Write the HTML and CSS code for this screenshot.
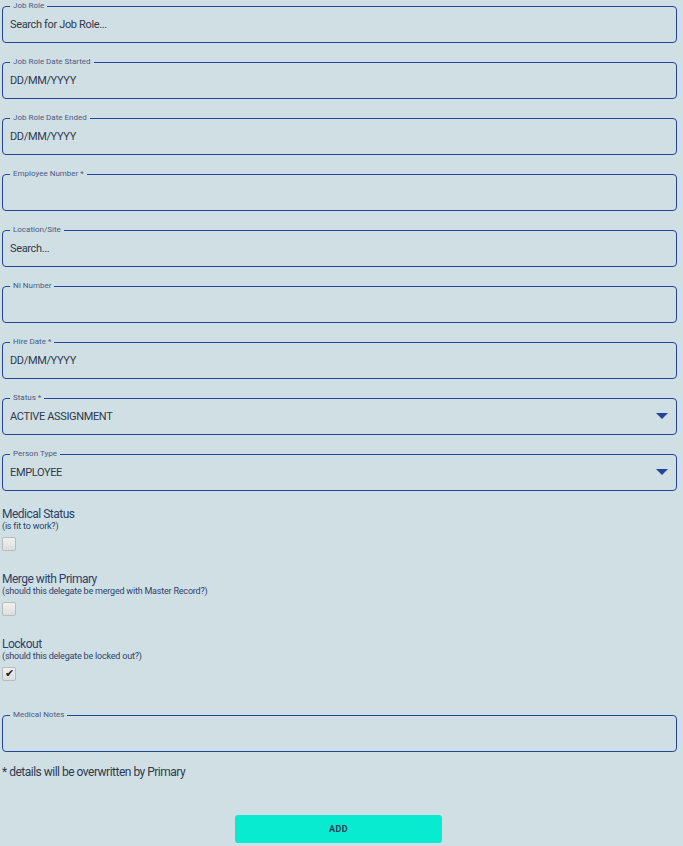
FILE: index.html
```html
<!DOCTYPE html>
<html>
<head>
	<title>Add Delegate</title>
	<link rel="stylesheet" href="styles.css">
</head>
<body>
<form class="delegate-form">
	<fieldset class="field">
		<legend>Job Role</legend>
		<div class="value placeholder">Search for Job Role...</div>
	</fieldset>
	<fieldset class="field">
		<legend>Job Role Date Started</legend>
		<div class="value placeholder">DD/MM/YYYY</div>
	</fieldset>
	<fieldset class="field">
		<legend>Job Role Date Ended</legend>
		<div class="value placeholder">DD/MM/YYYY</div>
	</fieldset>
	<fieldset class="field">
		<legend>Employee Number *</legend>
		<div class="value"></div>
	</fieldset>
	<fieldset class="field">
		<legend>Location/Site</legend>
		<div class="value placeholder">Search...</div>
	</fieldset>
	<fieldset class="field">
		<legend>NI Number</legend>
		<div class="value"></div>
	</fieldset>
	<fieldset class="field">
		<legend>Hire Date *</legend>
		<div class="value placeholder">DD/MM/YYYY</div>
	</fieldset>
	<fieldset class="field select">
		<legend>Status *</legend>
		<div class="value">ACTIVE ASSIGNMENT</div>
		<span class="caret"></span>
	</fieldset>
	<fieldset class="field select">
		<legend>Person Type</legend>
		<div class="value">EMPLOYEE</div>
		<span class="caret"></span>
	</fieldset>

	<div class="check">
		<div class="check-title">Medical Status</div>
		<div class="check-hint">(is fit to work?)</div>
		<span class="box"></span>
	</div>
	<div class="check">
		<div class="check-title">Merge with Primary</div>
		<div class="check-hint">(should this delegate be merged with Master Record?)</div>
		<span class="box"></span>
	</div>
	<div class="check">
		<div class="check-title">Lockout</div>
		<div class="check-hint">(should this delegate be locked out?)</div>
		<span class="box checked">&#10004;</span>
	</div>

	<fieldset class="field notes">
		<legend>Medical Notes</legend>
		<div class="value"></div>
	</fieldset>

	<p class="footnote">* details will be overwritten by Primary</p>

	<div class="actions">
		<button type="button" class="add-btn">ADD</button>
	</div>
</form>
</body>
</html>
```

FILE: styles.css
```css
body {
	margin: 0;
	background-color: #d0dfe3;
	font-family: Roboto, "Liberation Sans", sans-serif;
	color: #2f3a4f;
}

.delegate-form {
	padding: 1px 6px 0 2px;
}

.field {
	position: relative;
	margin: 0 0 14px 0;
	padding: 0 7px;
	height: 42px;
	border: solid 1px #24439a;
	border-radius: 4px;
	box-sizing: border-box;
}

.field legend {
	font-size: 8px;
	line-height: 10px;
	color: #4b5a86;
	padding: 0 3px;
	margin-left: 0;
}

.field .value {
	font-size: 11px;
	line-height: 14px;
	padding-top: 7px;
	letter-spacing: -0.35px;
	color: #2f3a4f;
}

.select .caret {
	position: absolute;
	right: 8px;
	top: 10px;
	width: 0;
	height: 0;
	border-left: 6px solid transparent;
	border-right: 6px solid transparent;
	border-top: 6px solid #24439a;
}

.check {
	padding-top: 2px;
	height: 63px;
}

.check-title {
	font-size: 12px;
	line-height: 14px;
	letter-spacing: -0.5px;
	color: #2c3f6e;
}

.check-hint {
	font-size: 9px;
	line-height: 11px;
	color: #2c3f6e;
	letter-spacing: -0.2px;
}

.box {
	display: block;
	margin-top: 5px;
	width: 12px;
	height: 12px;
	border: solid 1px #b9bcbf;
	border-radius: 2px;
	background: linear-gradient(#f1f1f1, #dcdddf);
	font-size: 11px;
	line-height: 12px;
	text-align: center;
	color: #222;
}

.notes {
	margin-top: 10px;
	margin-bottom: 0;
}

.footnote {
	margin: 13px 0 0 0;
	font-size: 12px;
	line-height: 14px;
	letter-spacing: -0.5px;
	color: #2f3a4f;
}

.actions {
	text-align: center;
	padding-top: 36px;
	padding-right: 2px;
}

.add-btn {
	width: 207px;
	height: 28px;
	border: none;
	border-radius: 3px;
	background-color: #08ebd0;
	color: #2f3a55;
	font-family: Roboto, sans-serif;
	font-weight: bold;
	font-size: 9px;
	letter-spacing: 0.5px;
}
```
